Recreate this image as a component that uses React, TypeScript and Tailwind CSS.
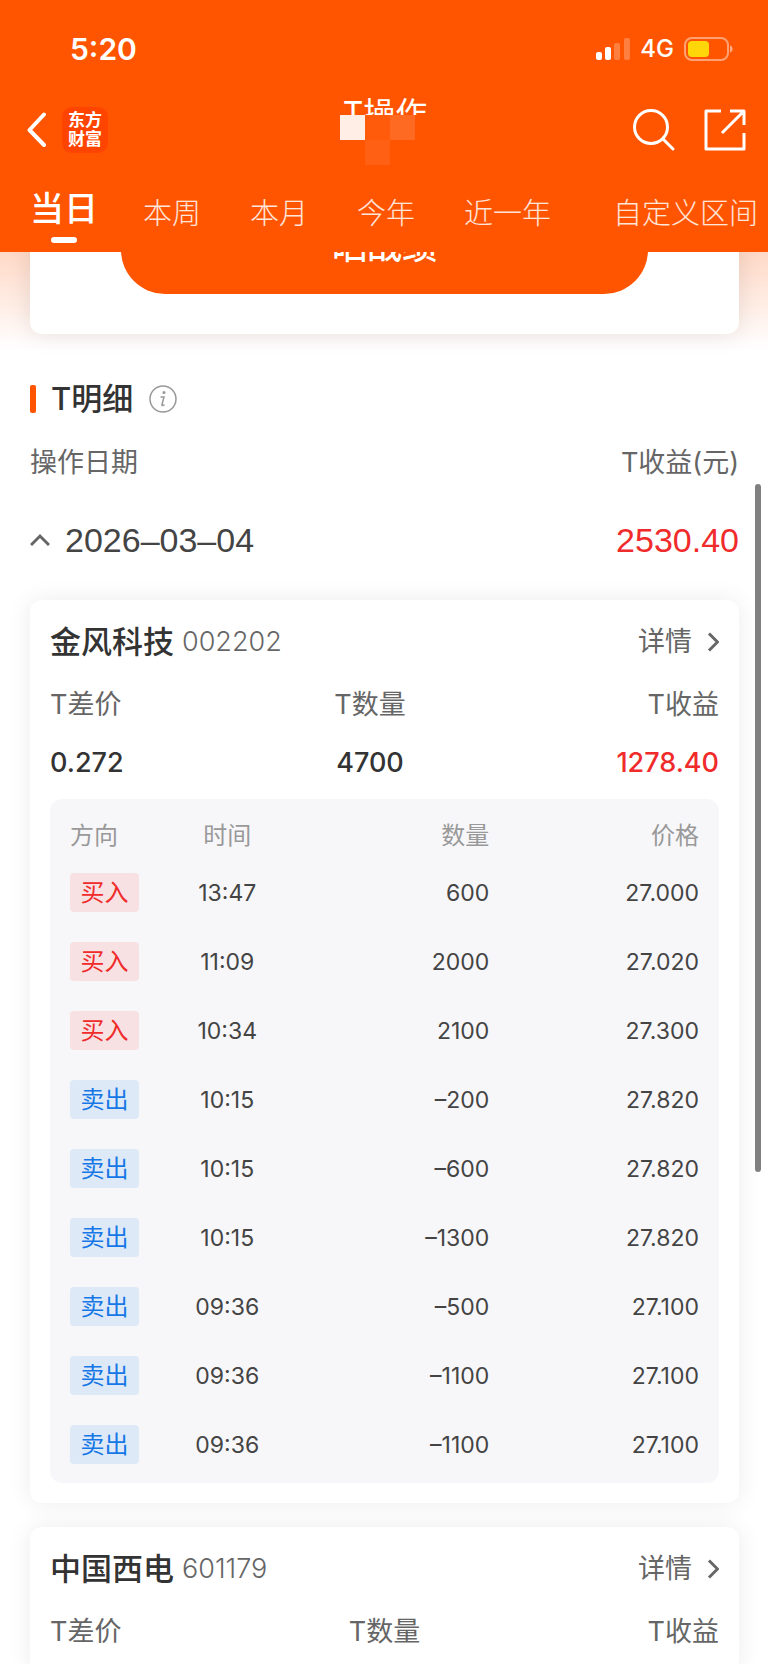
import { useState } from 'react';

type Trade = { side: 'buy' | 'sell'; time: string; qty: string; price: string };
type Stock = { name: string; code: string; spread?: string; qty?: string; profit?: string; trades: Trade[] };

const TABS = ['当日', '本周', '本月', '今年', '近一年', '自定义区间'];

const STOCKS: Stock[] = [
  {
    name: '金风科技',
    code: '002202',
    spread: '0.272',
    qty: '4700',
    profit: '1278.40',
    trades: [
      { side: 'buy', time: '13:47', qty: '600', price: '27.000' },
      { side: 'buy', time: '11:09', qty: '2000', price: '27.020' },
      { side: 'buy', time: '10:34', qty: '2100', price: '27.300' },
      { side: 'sell', time: '10:15', qty: '–200', price: '27.820' },
      { side: 'sell', time: '10:15', qty: '–600', price: '27.820' },
      { side: 'sell', time: '10:15', qty: '–1300', price: '27.820' },
      { side: 'sell', time: '09:36', qty: '–500', price: '27.100' },
      { side: 'sell', time: '09:36', qty: '–1100', price: '27.100' },
      { side: 'sell', time: '09:36', qty: '–1100', price: '27.100' }
    ]
  },
  { name: '中国西电', code: '601179', trades: [] }
];

function StatusBar() {
  return (
    <div className="flex h-[96px] shrink-0 items-center justify-between pl-[70px] pr-[35px] pt-px">
      <span className="text-[30px] font-semibold leading-none">5:20</span>
      <div className="flex items-center gap-[10px]">
        <svg width="34" height="24" viewBox="0 0 34 24" fill="#fff">
          <rect x="0" y="15" width="6" height="8" rx="2" />
          <rect x="9" y="10" width="6" height="13" rx="2" />
          <rect x="18" y="6" width="6" height="17" rx="2" opacity="0.25" />
          <rect x="28" y="1" width="6" height="22" rx="2" opacity="0.25" />
        </svg>
        <span className="text-[24px] font-medium leading-none">4G</span>
        <svg width="49" height="24" viewBox="0 0 49 24" fill="none">
          <rect x="1" y="1" width="43" height="22" rx="7" stroke="#fff" strokeOpacity="0.45" strokeWidth="2" />
          <rect x="4" y="4" width="21" height="16" rx="4" fill="#ffd60a" />
          <path d="M46 8.500c2 .6 2.600 2 2.600 3.500s-.6 2.900-2.600 3.500z" fill="#fff" fillOpacity="0.5" />
        </svg>
      </div>
    </div>
  );
}

function Header({ tab, onTab }: { tab: string; onTab: (t: string) => void }) {
  return (
    <header className="relative z-10 flex h-[252px] shrink-0 flex-col bg-[#ff5500] text-white">
      <StatusBar />
      <div className="grid h-[67px] shrink-0 grid-cols-3 pl-6 pr-[22px]">
        <div className="flex items-center gap-4">
          <button aria-label="返回">
            <svg width="22" height="36" viewBox="0 0 22 36" fill="none" stroke="#fff" strokeWidth="4" strokeLinecap="round" strokeLinejoin="round">
              <path d="M20 2.500 5.500 18 20 33" />
            </svg>
          </button>
          <div className="flex size-[46px] flex-col items-center justify-center rounded-[10px] bg-[#ff4400] text-[17px] font-bold leading-[19px]">
            <span>东方</span>
            <span>财富</span>
          </div>
        </div>
        <div className="flex justify-center">
          <div className="relative">
            <h1 className="text-[32px] leading-[36px]">T操作</h1>
            {/* mosaic over the account name */}
            <div className="absolute -left-[3px] top-[19px] grid grid-cols-[25px_25px_25px_25px] grid-rows-[25px_25px] bg-[#ff5500]">
              <i className="bg-[#ffeee6]" />
              <i className="bg-[#ff5b0b]" />
              <i className="bg-[#ff6a22]" />
              <i />
              <i />
              <i className="bg-[#ff6014]" />
            </div>
          </div>
        </div>
        <div className="flex items-center justify-end gap-[29px]">
          <button aria-label="搜索">
            <svg width="42" height="42" viewBox="0 0 42 42" fill="none" stroke="#fff" strokeWidth="3" strokeLinecap="round">
              <circle cx="18" cy="18" r="16.500" />
              <path d="M30 30 40 40" />
            </svg>
          </button>
          <button aria-label="分享">
            <svg width="42" height="42" viewBox="0 0 42 42" fill="none" stroke="#fff" strokeWidth="3" strokeLinejoin="round">
              <path d="M17 2H2v38h38V24M26 2h14v14M40 2 18 24" />
            </svg>
          </button>
        </div>
      </div>
      <nav className="flex flex-1 items-start gap-[49px] whitespace-nowrap pl-[30px] pt-6">
        {TABS.map((t) => (
          <button
            key={t}
            onClick={() => onTab(t)}
            className={
              t === tab
                ? '-mr-1 flex flex-col items-center text-[34px] font-medium leading-[44px]'
                : 'text-[29px] font-light leading-[54px] text-white/85 last:ml-[13px]'
            }
          >
            {t}
            {t === tab && <span className="mt-[6px] h-[6px] w-[26px] rounded-full bg-white" />}
          </button>
        ))}
      </nav>
    </header>
  );
}

function SideTag({ side }: { side: Trade['side'] }) {
  return (
    <span
      className={
        side === 'buy'
          ? 'flex h-[39px] w-[69px] items-center justify-center rounded-[4px] bg-[#f8e1e3] text-[#f02b2b]'
          : 'flex h-[39px] w-[69px] items-center justify-center rounded-[4px] bg-[#dde9f7] text-[#1677e6]'
      }
    >
      {side === 'buy' ? '买入' : '卖出'}
    </span>
  );
}

function TradeTable({ trades }: { trades: Trade[] }) {
  return (
    <div className="mt-4 rounded-[12px] bg-[#f7f7fa] px-5 pb-1 pt-[15px]">
      <table className="w-full table-fixed text-[24px] leading-[30px] text-[#444]">
        <thead>
          <tr className="h-[44px] text-[#999]">
            <th className="w-1/6 text-left font-normal">方向</th>
            <th className="w-1/6 text-center font-normal">时间</th>
            <th className="w-1/3 text-right font-normal">数量</th>
            <th className="w-1/3 text-right font-normal">价格</th>
          </tr>
        </thead>
        <tbody>
          {trades.map((t, i) => (
            <tr key={i} className="h-[69px]">
              <td><SideTag side={t.side} /></td>
              <td className="text-center text-[23px]">{t.time}</td>
              <td className="text-right text-[23px]">{t.qty}</td>
              <td className="text-right text-[23px]">{t.price}</td>
            </tr>
          ))}
        </tbody>
      </table>
    </div>
  );
}

function StockCard({ stock }: { stock: Stock }) {
  const cols = [
    { label: 'T差价', value: stock.spread, cls: 'items-start text-[#333]' },
    { label: 'T数量', value: stock.qty, cls: 'items-center text-[#333]' },
    { label: 'T收益', value: stock.profit, cls: 'items-end text-[#f02b2b]' }
  ];

  return (
    <article className="rounded-[12px] bg-white p-5 shadow-[0_0_24px_rgba(0,0,0,0.08)] last:flex-1">
      <div className="flex h-[44px] items-center justify-between">
        <h3 className="flex items-center gap-2 text-[31px] font-medium text-[#333]">
          {stock.name}
          <span className="text-[27px] font-light text-[#666]">{stock.code}</span>
        </h3>
        <a href="#detail" className="flex items-center gap-[15px] text-[27px] text-[#666]">
          详情
          <svg width="12" height="20" viewBox="0 0 12 20" fill="none" stroke="#666" strokeWidth="3">
            <path d="M2 1.500 10.500 10 2 18.500" />
          </svg>
        </a>
      </div>
      <dl className="mt-[21px] flex justify-between">
        {cols.map((c) => (
          <div key={c.label} className={`flex flex-col gap-[18px] ${c.cls}`}>
            <dt className="text-[27px] leading-[40px] text-[#666]">{c.label}</dt>
            {c.value && <dd className="text-[27px] font-medium leading-[40px]">{c.value}</dd>}
          </div>
        ))}
      </dl>
      {stock.trades.length > 0 && <TradeTable trades={stock.trades} />}
    </article>
  );
}

export default function App() {
  const [tab, setTab] = useState('当日');
  const [open, setOpen] = useState(true);

  return (
    <div className="relative flex h-screen flex-col overflow-hidden bg-white font-['Inter','Noto_Sans_CJK_SC',sans-serif]">
      <Header tab={tab} onTab={setTab} />

      <section className="shrink-0 bg-linear-to-b from-[#ffd9c7] to-white pl-[30px] pr-[29px] pb-4">
        <div className="-mt-[46px] rounded-[12px] bg-white px-[91px] pb-10 shadow-[0_0_24px_rgba(0,0,0,0.1)]">
          <button className="block h-[88px] w-full rounded-full bg-[#ff5500] pb-2 text-[35px] font-medium text-white">晒战绩</button>
        </div>
      </section>

      <main className="flex flex-1 flex-col pl-[30px] pr-[29px] pt-[27px]">
        <h2 className="flex h-[44px] items-center text-[31px] font-medium text-[#333]">
          <span className="mr-[15px] h-[28px] w-[6px] rounded-[2px] bg-[#ff5500]" />
          T明细
          <svg className="ml-4" width="28" height="28" viewBox="0 0 28 28" fill="none" stroke="#999" strokeWidth="1.500">
            <circle cx="14" cy="14" r="13" />
            <path d="M11.500 12h3.500l-2 7.500c-.3 1.300 1 1.200 2.500.2" />
            <circle cx="15" cy="7.500" r="0.800" fill="#999" />
          </svg>
        </h2>
        <div className="mt-[22px] flex h-[40px] items-center justify-between text-[27px] text-[#666]">
          <span>操作日期</span>
          <span>T收益(元)</span>
        </div>
        <button
          onClick={() => setOpen(!open)}
          className="mt-[35px] flex h-[44px] items-center font-['Liberation_Sans','Noto_Sans_CJK_SC',sans-serif] text-[34px] text-[#444]"
        >
          <svg className={open ? 'mr-[15px]' : 'mr-[15px] rotate-180'} width="20" height="14" viewBox="0 0 20 14" fill="none" stroke="#666" strokeWidth="3">
            <path d="M1 12 10 3l9 9" />
          </svg>
          2026–03–04
          <span className="ml-auto text-[#f02b2b]">2530.40</span>
        </button>
        {open && (
          <div className="mt-[38px] flex flex-1 flex-col gap-6">
            {STOCKS.map((s) => (
              <StockCard key={s.code} stock={s} />
            ))}
          </div>
        )}
      </main>

      <div className="absolute right-[7px] top-[484px] h-[688px] w-[6px] rounded-full bg-[#808080]" />
    </div>
  );
}
